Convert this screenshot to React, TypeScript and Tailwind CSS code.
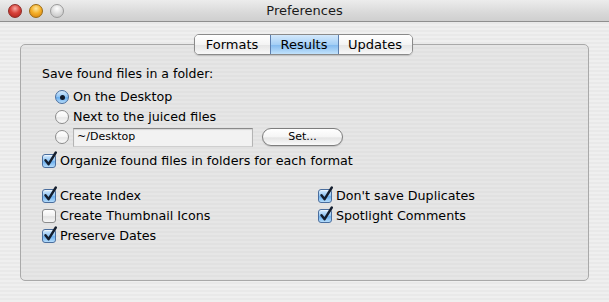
import React from 'react';

const font = { fontFamily: '"Lucida Grande", "DejaVu Sans", sans-serif' };

function Checkbox({ checked, label }: { checked: boolean; label: string }) {
  return (
    <div className="flex h-5 items-center gap-[4px]">
      <div className="relative h-[14px] w-[14px] shrink-0">
        <div
          className={
            checked
              ? 'h-[14px] w-[14px] rounded-[3px] border border-[#4a6e9e] bg-[linear-gradient(180deg,#d6ebfd_0%,#8cc2f3_50%,#6aaeee_55%,#b5dcfb_100%)] shadow-[inset_0_1px_1px_rgba(255,255,255,0.6)]'
              : 'h-[14px] w-[14px] rounded-[3px] border border-[#8c8c8c] bg-[linear-gradient(180deg,#ffffff_0%,#f1f1f1_50%,#e2e2e2_55%,#f7f7f7_100%)]'
          }
        />
        {checked && (
          <svg className="absolute -top-[3px] left-[1px]" width="15" height="16" viewBox="0 0 15 16">
            <path d="M2.5 9.2 L5.6 13.2 L12.8 1.5" fill="none" stroke="#141e2e" strokeWidth="2.4" strokeLinecap="round" strokeLinejoin="round" />
          </svg>
        )}
      </div>
      <span className="text-[12.7px] leading-none text-black">{label}</span>
    </div>
  );
}

function Radio({ checked, children }: { checked: boolean; children: React.ReactNode }) {
  return (
    <div className="flex h-5 items-center gap-[4px]">
      <div
        className={
          checked
            ? 'flex h-[14px] w-[14px] shrink-0 items-center justify-center rounded-full border border-[#4a6e9e] bg-[linear-gradient(180deg,#d6ebfd_0%,#8cc2f3_50%,#6aaeee_55%,#b5dcfb_100%)]'
            : 'h-[14px] w-[14px] shrink-0 rounded-full border border-[#8c8c8c] bg-[linear-gradient(180deg,#ffffff_0%,#f4f4f4_50%,#e8e8e8_55%,#fafafa_100%)]'
        }
      >
        {checked && <div className="h-[5px] w-[5px] rounded-full bg-[#101828]" />}
      </div>
      {children}
    </div>
  );
}

function Light({ cls }: { cls: string }) {
  return <div className={`h-[14px] w-[14px] rounded-full border ${cls}`} />;
}

export default function App() {
  return (
    <div style={font} className="flex h-[302px] w-[609px] flex-col overflow-hidden bg-[repeating-linear-gradient(180deg,#efefef_0px,#efefef_2px,#e9e9e9_2px,#e9e9e9_4px)] text-black">
      {/* title bar */}
      <div className="relative flex h-[22px] shrink-0 items-center justify-center border-b border-[#8f8f8f] bg-[linear-gradient(180deg,#ececec_0%,#d9d9d9_60%,#cfcfcf_100%)]">
        <div className="absolute left-[8px] top-[4px] flex gap-[7px]">
          <Light cls="border-[#8e2a25] bg-[radial-gradient(circle_at_50%_30%,#f7a9a3_0%,#d8433b_45%,#a81f18_100%)]" />
          <Light cls="border-[#9a6a12] bg-[radial-gradient(circle_at_50%_30%,#fde7a0_0%,#f5b12a_45%,#d37a09_100%)]" />
          <Light cls="border-[#9a9a9a] bg-[radial-gradient(circle_at_50%_30%,#ffffff_0%,#dcdcdc_50%,#bdbdbd_100%)]" />
        </div>
        <span className="text-[13px] text-[#1a1a1a]">Preferences</span>
      </div>

      {/* body */}
      <div className="flex flex-col pt-[12px]">
        <div className="relative z-10 flex justify-center pr-[3px]">
          <div className="flex h-[21px] overflow-hidden rounded-[5px] border border-[#8a8a8a] shadow-[0_1px_1px_rgba(0,0,0,0.15)]">
            <div className="flex w-[75px] items-center justify-center bg-[linear-gradient(180deg,#ffffff_0%,#f4f4f4_50%,#e6e6e6_55%,#f8f8f8_100%)] text-[13px]">
              Formats
            </div>
            <div className="flex w-[69px] items-center justify-center border-x border-[#5d7fae] bg-[linear-gradient(180deg,#d4e9fc_0%,#a5cff5_50%,#86bcef_55%,#c2e2fb_100%)] text-[13px]">
              Results
            </div>
            <div className="flex w-[73px] items-center justify-center bg-[linear-gradient(180deg,#ffffff_0%,#f4f4f4_50%,#e6e6e6_55%,#f8f8f8_100%)] text-[13px]">
              Updates
            </div>
          </div>
        </div>

        <div className="mx-[20px] -mt-[11px] h-[237px] rounded-[5px] border border-[#a9a9a9] bg-[repeating-linear-gradient(180deg,#e6e6e6_0px,#e6e6e6_2px,#e1e1e1_2px,#e1e1e1_4px)] pl-[21px] pt-[19px]">
          <div className="flex h-5 items-center text-[12.5px]">Save found files in a folder:</div>

          <div className="mt-[3px] flex flex-col pl-[13px]">
            <Radio checked>
              <span className="text-[12.7px]">On the Desktop</span>
            </Radio>
            <Radio checked={false}>
              <span className="text-[12.7px]">Next to the juiced files</span>
            </Radio>
            <Radio checked={false}>
              <div className="flex items-center">
                <div className="flex h-[19px] w-[180px] items-center border border-t-[#8a8a8a] border-x-[#b4b4b4] border-b-[#cfcfcf] bg-[#f2f2f2] pl-[3px] text-[11px] shadow-[inset_0_1px_1px_rgba(0,0,0,0.12)]">
                  ~/Desktop
                </div>
                <div className="ml-[9px] flex h-[18px] w-[81px] items-center justify-center rounded-full border border-[#7e7e7e] bg-[linear-gradient(180deg,#ffffff_0%,#f5f5f5_50%,#e4e4e4_55%,#fafafa_100%)] text-[11px] shadow-[0_1px_1px_rgba(0,0,0,0.15)]">
                  Set...
                </div>
              </div>
            </Radio>
          </div>

          <div className="mt-[4px]">
            <Checkbox checked label="Organize found files in folders for each format" />
          </div>

          <div className="mt-[15px] grid grid-cols-[276px_1fr]">
            <div className="flex flex-col">
              <Checkbox checked label="Create Index" />
              <Checkbox checked={false} label="Create Thumbnail Icons" />
              <Checkbox checked label="Preserve Dates" />
            </div>
            <div className="flex flex-col">
              <Checkbox checked label="Don't save Duplicates" />
              <Checkbox checked label="Spotlight Comments" />
            </div>
          </div>
        </div>
      </div>
    </div>
  );
}
